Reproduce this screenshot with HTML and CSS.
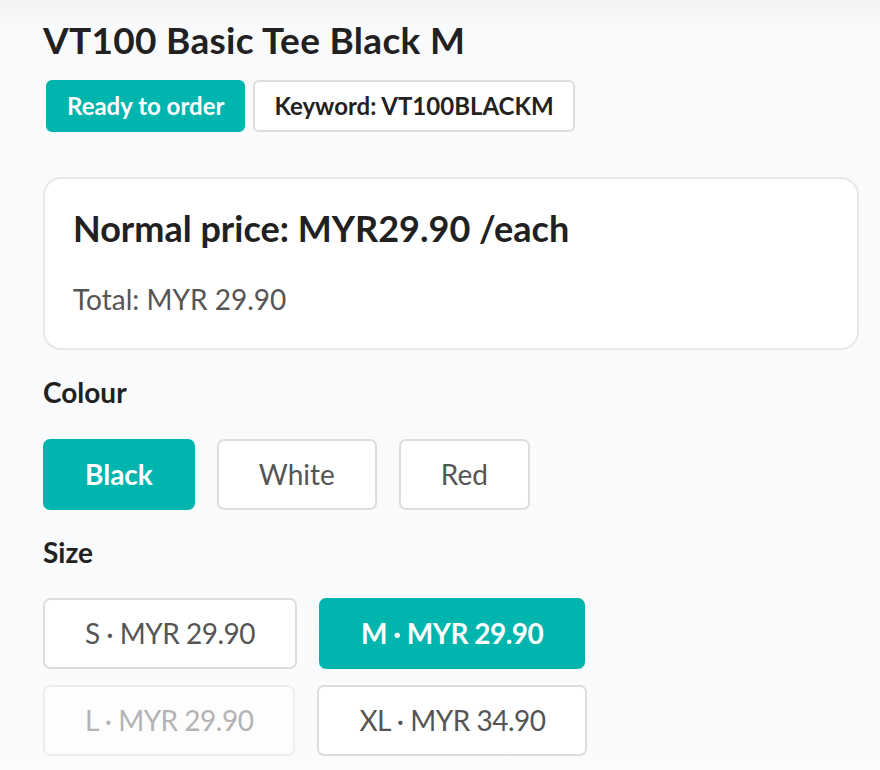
FILE: index.html
```html
<!DOCTYPE html>
<html lang="en">
<head>
  <meta charset="UTF-8" />
  <meta name="viewport" content="width=device-width, initial-scale=1.0"/>
  <title>VT100 Basic Tee Black M</title>
  <link rel="stylesheet" href="styles.css">
</head>
<body>
  <div class="product">
    <!-- Cabecera del producto -->
    <h1 class="product-title">VT100 Basic Tee Black M</h1>
    <div class="tags">
      <span class="tag tag-ready">Ready to order</span>
      <span class="tag tag-keyword">Keyword: VT100BLACKM</span>
    </div>

    <!-- Precio -->
    <div class="price-card">
      <h2 class="price">Normal price: MYR29.90 /each</h2>
      <p class="total">Total: MYR 29.90</p>
    </div>

    <!-- Opciones -->
    <h3 class="option-label">Colour</h3>
    <div class="options">
      <button class="option active">Black</button>
      <button class="option">White</button>
      <button class="option">Red</button>
    </div>

    <h3 class="option-label">Size</h3>
    <div class="options sizes">
      <button class="option">S · MYR 29.90</button>
      <button class="option active">M · MYR 29.90</button>
      <button class="option disabled" disabled>L · MYR 29.90</button>
      <button class="option">XL · MYR 34.90</button>
    </div>
  </div>
</body>
</html>
```

FILE: styles.css
```css
* { box-sizing: border-box; margin: 0; padding: 0; }
body {
  font-family: Lato, "Noto Sans", sans-serif;
  background: linear-gradient(#f2f3f5 0, #f9fafc 24px, #fafbfd 100%);
  min-height: 100vh;
  color: #212121;
}
.product {
  padding: 18px 21px 20px 43px;
}
.product-title {
  font-size: 37px;
  font-weight: 700;
  line-height: 1.2;
  letter-spacing: 0.3px;
  color: #212121;
}

/* Etiquetas */
.tags {
  display: flex;
  gap: 8px;
  margin: 18px 0 0 3px;
}
.tag {
  display: inline-block;
  font-size: 24px;
  font-weight: 700;
  line-height: 34px;
  padding: 7px 19px;
  border: 2px solid #ddd;
  border-radius: 6px;
  background: #fff;
  color: #222;
}
.tag-ready {
  background: #00b5ad;
  border-color: #00b5ad;
  color: #fff;
}

/* Tarjeta de precio */
.price-card {
  margin-top: 45px;
  background: #fff;
  border: 2px solid #e8e8e8;
  border-radius: 18px;
  padding: 28px 28px 32px;
}
.price {
  font-size: 36px;
  font-weight: 700;
  line-height: 1.2;
  color: #212121;
}
.total {
  margin-top: 32px;
  font-size: 28px;
  line-height: 1.2;
  color: #555;
}

/* Opciones de variante */
.option-label {
  font-size: 28px;
  font-weight: 700;
  line-height: 1.2;
  margin-top: 26px;
  color: #212121;
}
.options {
  display: flex;
  flex-wrap: wrap;
  gap: 16px 22px;
  margin-top: 29px;
}
.option {
  font-family: inherit;
  font-size: 28px;
  line-height: 35px;
  padding: 16px 40px;
  background: #fff;
  color: #555;
  border: 2px solid #ddd;
  border-radius: 7px;
  cursor: pointer;
}
.sizes .option { letter-spacing: -0.5px; }
.option.active {
  background: #00b5ad;
  border-color: #00b5ad;
  color: #fff;
  font-weight: 700;
}
.option.disabled {
  background: #fdfdfe;
  border-color: #eee;
  color: #b3b3b3;
  cursor: default;
}
```
